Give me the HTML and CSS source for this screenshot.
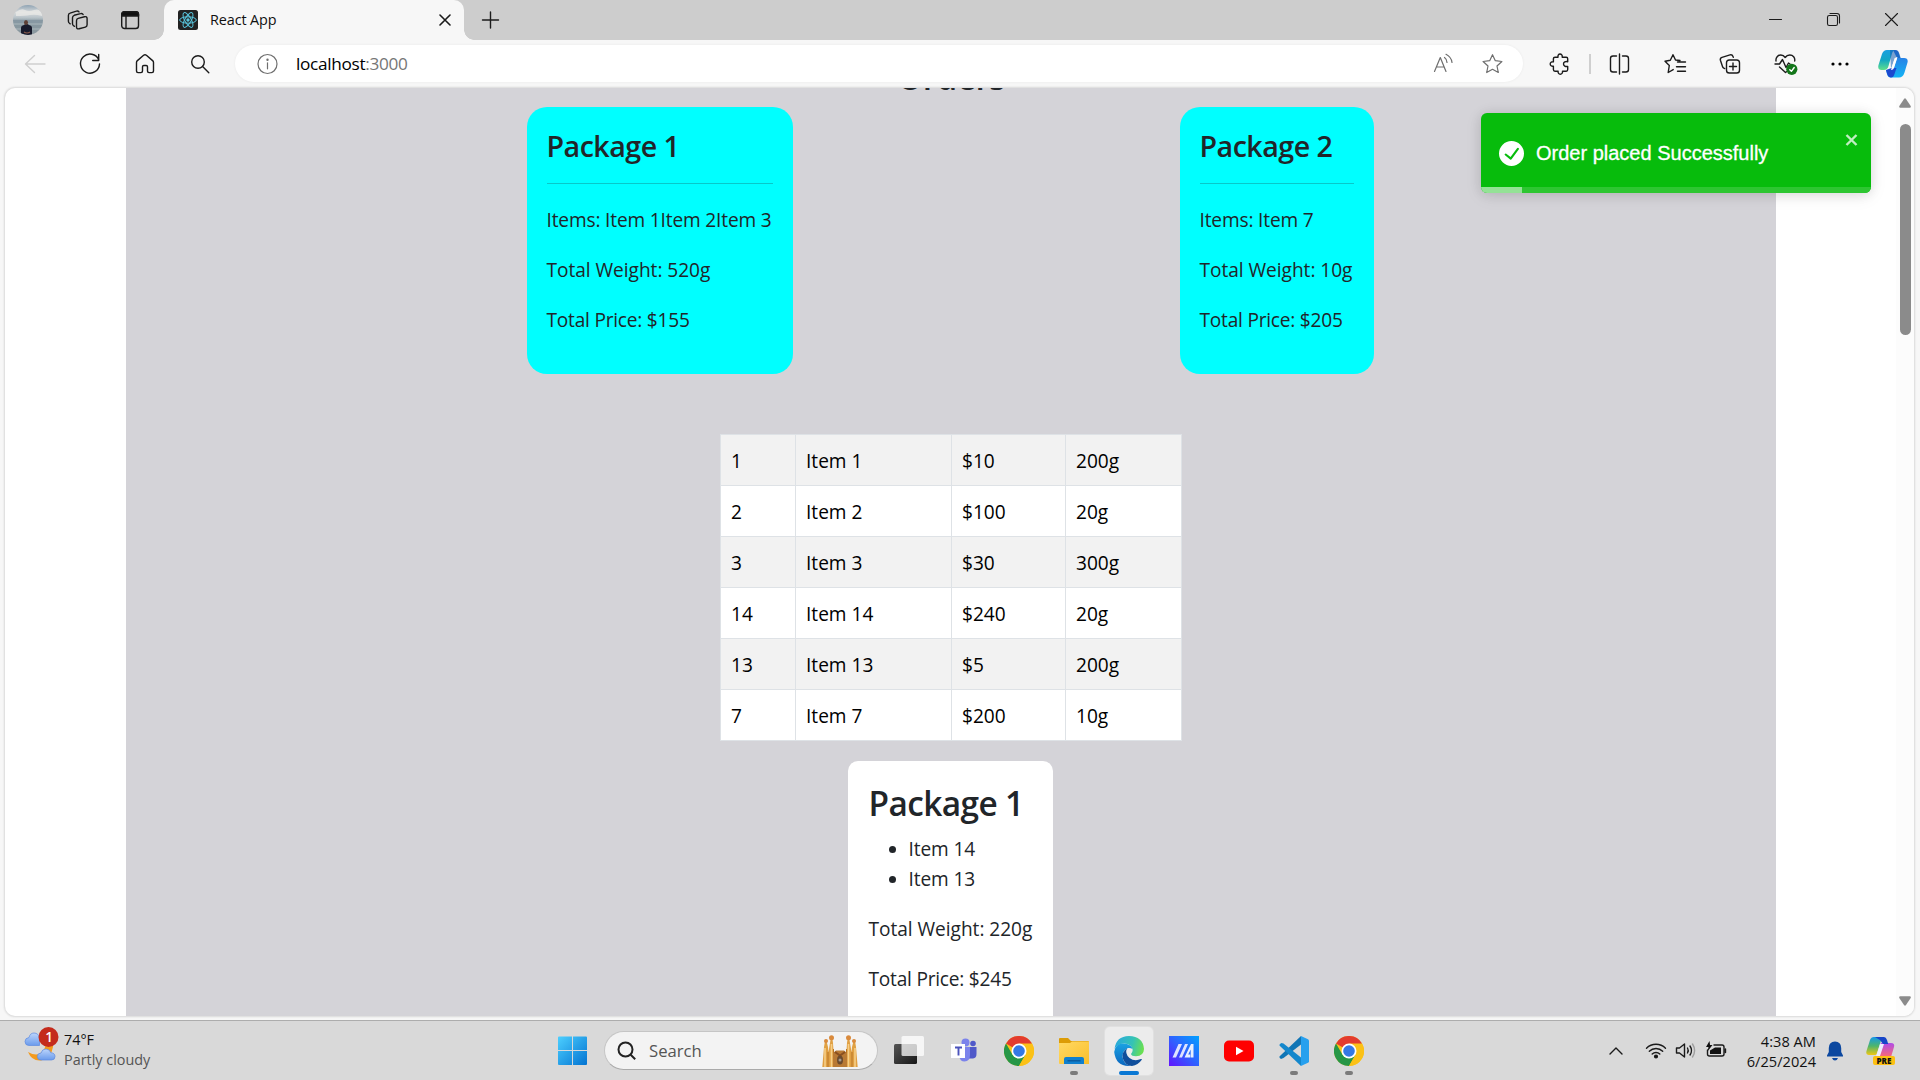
FILE: index.html
```html
<!DOCTYPE html>
<html lang="en">
<head>
<meta charset="utf-8">
<title>React App</title>
<link rel="stylesheet" href="styles.css">
</head>
<body>
<div class="screen">
  <header class="tabstrip">
    <svg class="avatar" width="30" height="30" viewBox="0 0 30 30">
      <defs>
        <clipPath id="av"><circle cx="15" cy="15" r="15"/></clipPath>
        <linearGradient id="sky" x1="0" y1="0" x2="0" y2="1"><stop offset="0" stop-color="#8fa3b3"/><stop offset=".25" stop-color="#d9dcdc"/><stop offset=".42" stop-color="#b9c3c9"/><stop offset=".5" stop-color="#8798a3"/><stop offset="1" stop-color="#8b989e"/></linearGradient>
      </defs>
      <g clip-path="url(#av)">
        <rect width="30" height="30" fill="url(#sky)"/>
        <path d="M3 7q5-4 9-2t9 0 8 3v3q-7-2-12-1T3 11z" fill="#e9e9e6" opacity=".8"/>
        <path d="M0 14h30M0 19h30M0 24h30" stroke="#c3cccf" opacity=".6"/>
        <path d="M8 30v-7q0-2.500 3-3l1.500-1h2l1.500 1q3 .5 3 3v7z" fill="#171a2b"/>
        <ellipse cx="13" cy="17.500" rx="2" ry="2.600" fill="#5d4036"/>
        <path d="M11 27q3 2 6 0" stroke="#8a5b4a" stroke-width="1.200" fill="none"/>
      </g>
    </svg>
    <svg class="ic workspaces" width="24" height="24" viewBox="0 0 24 24"><path d="M12.200 10.400l6.300-1.700c1.500-.4 2.600.4 2.600 1.900v6.200c0 1.200-.6 2-1.700 2.300l-6.300 1.700c-1.500.4-2.600-.4-2.600-1.900v-6.200c0-1.200.6-2 1.700-2.300z"/><path d="M8.500 18.300l-.6-.3c-.9-.5-1.400-1.200-1.400-2.200V9.700c0-1.200.6-2 1.700-2.400l6.300-1.700c1.200-.4 2.200 0 2.600 1"/><path d="M4.200 15.800l-.5-.3c-.8-.5-1.300-1.200-1.300-2.200V7.400c0-1.200.6-2 1.700-2.300l6.300-1.900c1-.4 2-.1 2.600.7"/></svg>
    <svg class="ic tabmenu" width="24" height="24" viewBox="0 0 24 24"><rect x="3.700" y="3.700" width="16.800" height="16.800" rx="2.800"/><path d="M3.700 8V6.200a2.500 2.500 0 0 1 2.500-2.500h11.800a2.500 2.500 0 0 1 2.500 2.500V8z" class="solid"/><path d="M8 8v12"/></svg>
    <div class="tab">
      <svg width="20" height="20" viewBox="0 0 20 20"><rect width="20" height="20" rx="2.500" fill="#222"/><g fill="none" stroke="#58c4dc" stroke-width="1"><ellipse cx="10" cy="10" rx="8.300" ry="3.200"/><ellipse cx="10" cy="10" rx="8.300" ry="3.200" transform="rotate(60 10 10)"/><ellipse cx="10" cy="10" rx="8.300" ry="3.200" transform="rotate(120 10 10)"/></g><circle cx="10" cy="10" r="1.700" fill="#58c4dc"/></svg>
      <span class="tab-title">React App</span>
      <svg class="ic thick" width="12" height="12" viewBox="0 0 12 12"><path d="M1 1l10 10M11 1L1 11"/></svg>
    </div>
    <svg class="ic newtab" width="20" height="20" viewBox="0 0 20 20"><path d="M10.500 2v16M2.500 10h16"/></svg>
    <div class="window-buttons">
      <svg class="ic thin" width="20" height="20" viewBox="0 0 20 20"><path d="M3.500 9.500h12" /></svg>
      <svg class="ic thin" width="20" height="20" viewBox="0 0 20 20"><rect x="3.500" y="5.500" width="10" height="10" rx="1.800"/><path d="M6 3.500h7a2.500 2.500 0 0 1 2.500 2.500v7"/></svg>
      <svg class="ic thin" width="20" height="20" viewBox="0 0 20 20"><path d="M3.500 3.500l12 12M15.500 3.500l-12 12"/></svg>
    </div>
  </header>

  <div class="toolbar">
    <nav class="nav-buttons">
      <svg class="ic disabled" width="24" height="24" viewBox="0 0 24 24"><path d="M22 12H2.500M11.500 3.500L2.500 12l9 8.500"/></svg>
      <svg class="ic" width="24" height="24" viewBox="0 0 24 24"><path d="M20.800 8A9.500 9.500 0 1 0 21.500 12M20.700 2.500v6h-6"/></svg>
      <svg class="ic" width="24" height="24" viewBox="0 0 24 24"><path d="M3.500 10.500c0-.8.300-1.400.9-1.900L10.600 3.200c.9-.7 1.900-.7 2.800 0l6.200 5.400c.6.500.9 1.100.9 1.900v8.600c0 .9-.6 1.500-1.500 1.500h-3c-.9 0-1.500-.6-1.500-1.500v-4.300c0-.8-.5-1.300-1.300-1.300h-2.400c-.8 0-1.300.5-1.300 1.300v4.300c0 .9-.6 1.500-1.500 1.500H5c-.9 0-1.500-.6-1.500-1.500z"/></svg>
      <svg class="ic" width="24" height="24" viewBox="0 0 24 24"><circle cx="10" cy="10" r="6.300"/><path d="M14.600 14.600l6.200 6.200"/></svg>
    </nav>
    <div class="address">
      <svg class="ic grey" width="22" height="22" viewBox="0 0 22 22"><circle cx="10.500" cy="11" r="9.500"/><path d="M10.500 9.800v6"/><circle cx="10.500" cy="6.700" r=".6"/></svg>
      <span class="url">localhost<span class="port">:3000</span></span>
      <div class="address-actions">
        <svg class="ic grey" width="24" height="24" viewBox="0 0 24 24"><path d="M3.500 19.500L9.300 5.500l5.700 14M5.500 15h7.500M13.500 5.500q2.300 1.600 2.500 5M15 2.300q5.500 3 6 8.200"/></svg>
        <svg class="ic grey" width="24" height="24" viewBox="0 0 24 24"><path d="M11.500 2.700l2.800 6 6.600.8-4.900 4.500 1.300 6.500-5.800-3.200-5.800 3.200 1.300-6.500-4.900-4.500 6.600-.8z"/></svg>
      </div>
    </div>
    <div class="tools">
      <svg class="ic t-puzzle" width="24" height="24" viewBox="0 0 24 24"><path d="M10 5.200C9.700 3.300 10.600 2 12 2s2.600 1.300 2.200 3.200h4c1 0 1.500.6 1.500 1.500v3c-2.200-.6-4.200.5-4.200 2.300s2 3 4.200 2.400v3.200c0 1-.5 1.600-1.500 1.600h-3.700c.3 1.800-.8 3-2.200 3s-2.500-1.200-2.200-3H7c-1 0-1.600-.6-1.600-1.600v-3.400C3.500 14.500 2.200 13.400 2.200 12s1.300-2.500 3.200-2.200V6.700c0-.9.600-1.500 1.600-1.500z"/></svg>
      <i class="divider"></i>
      <svg class="ic t-split" width="24" height="24" viewBox="0 0 24 24"><path d="M8.500 4H5A2.500 2.500 0 0 0 2.500 6.500v11A2.500 2.500 0 0 0 5 20H8.500M14.500 4H18a2.500 2.500 0 0 1 2.500 2.500v11A2.500 2.500 0 0 1 18 20h-3.500M11.500 2v20"/></svg>
      <svg class="ic" width="24" height="24" viewBox="0 0 24 24"><path d="M17 8.500l-4.500-.5L10 2.700 7.300 8.300 2 9.200l4.300 4.300L5.200 20.500l5-2.900M14.500 10h8M13.500 14.700h9M14.500 19.300h8"/></svg>
      <svg class="ic" width="24" height="24" viewBox="0 0 24 24"><rect x="8.500" y="8" width="13" height="13" rx="2.800"/><path d="M15 11v7M11.500 14.500h7M6.700 16.500l-.9-.3c-.8-.4-1.100-1-1.300-1.700L2.400 8.200c-.4-1.400.2-2.400 1.600-2.900L12 2.900c1.400-.4 2.500.2 3 1.600l.3.900"/></svg>
      <svg class="ic t-heart" width="26" height="24" viewBox="0 0 26 24"><path d="M2 9C1.500 5.500 4 3 6.800 3c2 0 3.400 1 4.400 2.500C12.200 4 13.800 3 15.800 3c3.200 0 5.500 2.500 4.900 6M1 12h4.500l3-4.500 3.500 8 2.500-4.500 1.500 1M5.500 15l6 5.500 1-.8"/><circle cx="17.800" cy="17.300" r="5.600" fill="#13761a" stroke="none"/><path d="M15.800 17.800l1.600 1.500 2.800-3.800" stroke="#fff"/></svg>
      <svg class="t-dots" width="24" height="24" viewBox="0 0 24 24"><circle cx="5" cy="12" r="1.600"/><circle cx="12" cy="12" r="1.600"/><circle cx="19" cy="12" r="1.600"/></svg>
      <svg class="t-copilot" width="30" height="28" viewBox="0 0 30 28">
        <defs><linearGradient id="c1" x1="0" y1="0" x2="0" y2="1"><stop offset="0" stop-color="#1a9fe0"/><stop offset=".5" stop-color="#12a7c4"/><stop offset="1" stop-color="#5fe08b"/></linearGradient><linearGradient id="c2" x1="0" y1="0" x2="0" y2="1"><stop offset="0" stop-color="#2f6ee0"/><stop offset="1" stop-color="#14b4f5"/></linearGradient></defs>
        <path d="M15 0h2q3 0 3.800 3l1.600 5H26q4.500 0 3.500 4.500l-3 10Q25 27.500 21 27.500h-8q-3 0-4-3.500l-1-4h5q2 0 3-3l3-9z" fill="url(#c2)"/>
        <path d="M8 20l1 3.500q1 4 4 4 2.500 0 3.500-3.500l2-6-5 0z" fill="#1c49cf"/>
        <path d="M9 0h8.500q-2.500 0-3.500 3.500L10.500 16Q9.500 20 6 20H3.500Q-.7 20 .5 15L4 4Q5.500 0 9 0z" fill="url(#c1)"/>
        <path d="M12 0h5.500q3 0 4 4l1.200 4H19q-2 0-3 2.500L13 19z" fill="#125bb0" opacity=".55"/>
        <path d="M16.500 8.500q1-1.500 3-1.500L16 18q-.8 2-3 2z" fill="#fff"/>
      </svg>
    </div>
  </div>

  <div class="page-frame">
    <main class="content">
      <h3 class="orders">Orders</h3>
      <section class="packages">
        <article class="package package-wide">
          <h4>Package 1</h4><hr>
          <p class="items">Items: Item 1Item 2Item 3</p><p class="weight">Total Weight: 520g</p><p class="price">Total Price: $155</p>
        </article>
        <article class="package package-narrow">
          <h4>Package 2</h4><hr>
          <p class="items">Items: Item 7</p><p class="weight">Total Weight: 10g</p><p class="price">Total Price: $205</p>
        </article>
      </section>
      <table class="items-table">
        <colgroup><col class="c-id"><col class="c-name"><col class="c-price"><col class="c-weight"></colgroup>
        <tbody>
          <tr><td>1</td><td>Item 1</td><td>$10</td><td>200g</td></tr>
          <tr><td>2</td><td>Item 2</td><td>$100</td><td>20g</td></tr>
          <tr><td>3</td><td>Item 3</td><td>$30</td><td>300g</td></tr>
          <tr><td>14</td><td>Item 14</td><td>$240</td><td>20g</td></tr>
          <tr><td>13</td><td>Item 13</td><td>$5</td><td>200g</td></tr>
          <tr><td>7</td><td>Item 7</td><td>$200</td><td>10g</td></tr>
        </tbody>
      </table>
      <article class="summary">
        <h3>Package 1</h3>
        <ul><li>Item 14</li><li>Item 13</li></ul>
        <p class="weight">Total Weight: 220g</p><p class="price">Total Price: $245</p>
      </article>
    </main>
    <div class="scrollbar">
      <svg width="12" height="10" viewBox="0 0 12 10"><path d="M5 .9q1-1.300 2 0L11.700 8q.6 1.700-1 1.700H1.300q-1.600 0-1-1.700z"/></svg>
      <i class="thumb"></i>
      <svg class="down" width="12" height="10" viewBox="0 0 12 10"><path d="M5 9.100q1 1.300 2 0L11.700 2q.6-1.700-1-1.700H1.300q-1.600 0-1 1.700z"/></svg>
    </div>
    <div class="toast">
      <svg width="25" height="25" viewBox="0 0 24 24" fill="#fff"><path d="M12 0a12 12 0 1 0 12 12A12.014 12.014 0 0 0 12 0zm6.927 8.200l-6.845 9.289a1.011 1.011 0 0 1-1.430.188l-4.888-3.908a1 1 0 1 1 1.250-1.562l4.076 3.261 6.227-8.451a1 1 0 1 1 1.610 1.183z"/></svg>
      <span>Order placed Successfully</span>
      <svg class="toast-close" width="13" height="14" viewBox="0 0 13 14"><path d="M1.500 2l10 10M11.500 2l-10 10"/></svg>
      <i class="toast-progress"></i>
    </div>
  </div>

  <footer class="taskbar">
    <div class="weather">
      <svg width="36" height="36" viewBox="0 0 36 36">
        <defs><linearGradient id="cl" x1="0" y1="0" x2="0" y2="1"><stop offset="0" stop-color="#bcd5fb"/><stop offset="1" stop-color="#6b9bec"/></linearGradient></defs>
        <path d="M29 17v3q-2 12-12 13.500Q8 34.500 4 25q9 5 14 0 3.500-4 4-8z" fill="#f49a1c"/>
        <path d="M5 18.500q-4 0-4-4 0-3.500 4-4Q6 6 10 6q4.500 0 5.500 5v7.500z" fill="url(#cl)" stroke="#5e8be0" stroke-width=".7"/>
        <path d="M17 33q-3.500 0-3.700-3.500Q13.500 26 17 26q1-4 5-4 3.600 0 4.800 3.700Q31 26 31 29.500q0 3.500-3.500 3.500z" fill="url(#cl)" stroke="#5e8be0" stroke-width=".7"/>
        <circle cx="24.500" cy="10" r="10" fill="#c42b1c"/>
        <text x="25" y="15" class="badge-text">1</text>
      </svg>
      <div class="weather-text"><div>74°F</div><div class="muted">Partly cloudy</div></div>
    </div>
    <div class="apps">
      <svg class="start" width="30" height="30" viewBox="0 0 30 30"><defs><linearGradient id="win" gradientUnits="userSpaceOnUse" x1="0" y1="0" x2="30" y2="30"><stop offset="0" stop-color="#4dd0ff"/><stop offset="1" stop-color="#0070d0"/></linearGradient></defs><path d="M0 1.500Q0 .5 1 .5h13V14H0zM15 .5h13q1 0 1 1V14H15zM0 15h14v14H1q-1 0-1-1zM15 15h14v13q0 1-1 1H15z" fill="url(#win)"/></svg>
      <div class="search">
        <svg width="20" height="20" viewBox="0 0 20 20"><circle cx="8.500" cy="8.500" r="7"/><path d="M13.700 13.700l4.500 4.500"/></svg>
        <span>Search</span>
        <svg class="castle" width="36" height="32" viewBox="0 0 36 32">
          <path d="M.3 32L2 12l1-6h1.500L6 12l.5 5L8 8l.8-5h1.500L11 8l1.500 24z" fill="#e0a043"/>
          <path d="M35.700 32L34 12l-1-6h-1.500L30 12l-.5 5L28 8l-.8-5h-1.500L25 8l-1.500 24z" fill="#e0a043"/>
          <path d="M3 32V13M9.500 32V9M33 32V13M26.500 32V9" stroke="#f7cf87" stroke-width="1.600"/>
          <path d="M6 32V17M30 32V17M11.500 32V14M24.500 32V14" stroke="#b87426"/>
          <path d="M11 32V18l3-2.500h8l3 2.500v14z" fill="#b97a35"/><path d="M13 17l5 3.500 5-3.500" fill="none" stroke="#8a4f20" stroke-width="2"/>
          <ellipse cx="18" cy="25" rx="3" ry="4.500" fill="#6b4b2f"/><circle cx="18" cy="25" r="1.500" fill="#a39a90"/>
          <g fill="#d98a3c"><circle cx="4" cy="6" r="2"/><circle cx="9.500" cy="2.800" r="2.500"/><circle cx="26.500" cy="2.800" r="2.500"/><circle cx="32" cy="6" r="2"/></g>
        </svg>
      </div>
      <svg class="taskview" width="30" height="29" viewBox="0 0 30 29"><defs><linearGradient id="tv" x1="0" y1="0" x2="1" y2="1"><stop offset="0" stop-color="#555"/><stop offset="1" stop-color="#171717"/></linearGradient></defs><rect x="0" y="8" width="23" height="20" rx="1.500" fill="url(#tv)"/><rect x="7.500" width="22.500" height="20" rx="1.500" fill="#fff" opacity=".75"/></svg>
      <svg class="teams" width="28" height="26" viewBox="0 0 28 26"><circle cx="15.500" cy="4.500" r="4" fill="#7b83eb"/><circle cx="23" cy="5.500" r="2.800" fill="#5059c9"/><path d="M19 9h7.500v7q0 4-3.500 4.500h-4z" fill="#5059c9"/><path d="M9 9h11v8q0 6-5.500 6.500Q10 23.500 9 18z" fill="#7b83eb"/><rect x="1" y="6" width="14" height="14" fill="#fff"/><path d="M5 9.500h7M8.500 9.500v8" stroke="#4b53bc" stroke-width="1.900"/></svg>
      <div class="app"><svg width="30" height="30" viewBox="0 0 30 30"><g id="chrome-logo"><circle cx="15" cy="15" r="15" fill="#fbc116"/><path d="M15 15L2 7.500A15 15 0 0 1 28 7.500z" fill="#e33b2e"/><path d="M2 7.500A15 15 0 0 0 15 30L21.500 18.700 15 21.500 8.500 18.700z" fill="#269646"/><path d="M15 7.500h13A15 15 0 0 1 15 30l6.500-11.200z" fill="#fbc116"/><circle cx="15" cy="15" r="7.500" fill="#fff"/><circle cx="15" cy="15" r="5.800" fill="#3578e5"/></g></svg></div>
      <div class="app running"><svg width="30" height="30" viewBox="0 0 30 30"><defs><linearGradient id="fo" x1="0" y1="0" x2="1" y2="1"><stop offset="0" stop-color="#ffd964"/><stop offset="1" stop-color="#fbbf2a"/></linearGradient></defs><path d="M0 3q0-1 1-1h8l3 3h17q1 0 1 1v4H0z" fill="#dc9c06"/><path d="M0 7h11l2-1.500h17V28H1q-1 0-1-1z" fill="url(#fo)"/><path d="M5 28v-5q0-2 2-2h16q2 0 2 2v5z" fill="#1080cf"/><path d="M8.500 24.800h13" stroke="#0b5495" stroke-width="1.200"/></svg></div>
      <div class="app active"><svg width="30" height="30" viewBox="0 0 30 30"><defs><linearGradient id="e1" x1="0" y1=".3" x2="1" y2=".5"><stop offset="0" stop-color="#2aa9dd"/><stop offset=".6" stop-color="#35c3b5"/><stop offset="1" stop-color="#6be04f"/></linearGradient><linearGradient id="e2" x1="0" y1="0" x2="0" y2="1"><stop offset="0" stop-color="#1ba2e2"/><stop offset="1" stop-color="#0b66bf"/></linearGradient></defs><path d="M.5 13Q2 .2 15 0q14 .5 15 13-.2 7-8 7.200-4.500 0-5-2.200 1.700-2 1.700-4Q18 8 10 7.500 3 8 .5 13z" fill="url(#e1)"/><path d="M.2 16Q1 7.500 9.500 7.500 17.500 8 18.500 13q-2-1.500-4.500-1-5.500 2.500-5.500 9 1 7 8 8.900Q2 31 .2 16z" fill="url(#e2)"/><path d="M13 12.200q-5.500 4-4.300 10Q11 29.500 18 30q6-.8 9.800-6.200.3-1-.8-.7-6.500 2.700-11.500-1.100-5-4.500-2.500-9.800z" fill="#104f9c"/></svg></div>
      <div class="app"><svg width="30" height="30" viewBox="0 0 30 30"><defs><linearGradient id="as" x1="0" y1="1" x2="1" y2="0"><stop offset="0" stop-color="#6213ff"/><stop offset=".5" stop-color="#2f62ff"/><stop offset="1" stop-color="#00a2ff"/></linearGradient></defs><rect width="30" height="30" fill="url(#as)"/><path d="M3.500 21.500L9.500 8h3.500L7 21.500zM10 21.500L16 8h3l-6 13.500z" fill="#dfe4ff"/><path d="M15.500 21.500L22 8h2.500v13.500h-2.800v-8l-2.500 5h2v3z" fill="#e8f0ff"/></svg></div>
      <div class="app"><svg width="30" height="30" viewBox="0 0 30 30"><rect y="4.500" width="30" height="21" rx="5" fill="#f00"/><path d="M12 10.700v8.600l7.500-4.300z" fill="#fff"/></svg></div>
      <div class="app running"><svg width="30" height="30" viewBox="0 0 30 30"><path d="M22 0v8.500L4.500 22 2 23Q-.3 21.500.7 20.200z" fill="#1075b5"/><path d="M22 30v-8.500L4.500 7.500 2.500 7Q-.3 8.500.7 9.800z" fill="#1487cc"/><path d="M22 0l7 3.200q1 .5 1 1.600v20.400q0 1.100-1 1.600L22 30z" fill="#27a0ee"/></svg></div>
      <div class="app running"><svg width="30" height="30" viewBox="0 0 30 30"><use href="#chrome-logo"/></svg></div>
    </div>
    <div class="tray">
      <svg class="ic" width="16" height="16" viewBox="0 0 16 16"><path d="M2 11l6-6 6 6"/></svg>
      <svg class="ic t-wifi" width="22" height="22" viewBox="0 0 22 22"><path d="M1.500 8.200a13.500 13.500 0 0 1 19 0M4.300 11.200a9.500 9.500 0 0 1 13.400 0M7.200 14a5.400 5.400 0 0 1 7.600 0"/><circle cx="11" cy="16.500" r="1.400" class="solid"/></svg>
      <svg class="ic t-sound" width="22" height="22" viewBox="0 0 22 22"><path d="M1.500 8h3L9.500 4v13l-5-4h-3zM12.500 8q1.500 2.500 0 5M15 6q3 4.500 0 9"/><path d="M17.500 4q4.200 6.500 0 13" opacity=".3"/></svg>
      <svg class="ic t-battery" width="22" height="22" viewBox="0 0 22 22"><path d="M9 5h8a2 2 0 0 1 2 2v7a2 2 0 0 1-2 2H4.500a2 2 0 0 1-2-2v-4M20.500 9v3.500"/><path d="M5 14v-3.500l5-3h6V14zM4.500 1L1 7h2.500l-1 4.500L7.500 5H5z" class="solid" stroke="none"/></svg>
      <div class="clock"><div>4:38 AM</div><div>6/25/2024</div></div>
      <svg class="t-bell" width="18" height="20" viewBox="0 0 18 20"><path d="M9 .5q6 0 6.200 6.500V11l1.800 3.500v1H1v-1L2.800 11V7Q3 .5 9 .5zM6 17h6q-1 2.500-3 2.500T6 17z" fill="#0c48a0"/></svg>
      <svg class="t-pre" width="30" height="30" viewBox="0 0 30 30">
        <defs><linearGradient id="p1" x1="0" y1="0" x2="0" y2="1"><stop offset="0" stop-color="#159ae8"/><stop offset=".5" stop-color="#4eb56c"/><stop offset="1" stop-color="#f0c813"/></linearGradient><linearGradient id="p2" x1="0" y1="0" x2="0" y2="1"><stop offset="0" stop-color="#b04ce8"/><stop offset="1" stop-color="#fb6a72"/></linearGradient></defs>
        <path d="M15 7h10q4 0 3 4l-3 10H10z" fill="url(#p2)"/><path d="M8 1h8l-5 17q-.5 1-2 1H3q-3.500 0-2.500-4L4 4q1-3 4-3z" fill="url(#p1)"/><path d="M9 1h9q2 0 3 3l1.200 4H17l-3-4z" fill="#1746c8"/><path d="M14 8h4l-4 12h-4z" fill="#eef"/>
        <rect x="7" y="20" width="22" height="9" rx="2" fill="#fcc012"/><text x="18" y="27.500" class="pre-text">PRE</text>
      </svg>
    </div>
  </footer>
</div>
</body>
</html>
```
FILE: styles.css
```css
* { box-sizing: border-box; }
body { margin: 0; font-family: "Open Sans", "Noto Sans", sans-serif; color: #212529; }
.screen { width: 1920px; height: 1080px; display: flex; flex-direction: column; overflow: hidden; background: #f7f7f7; }
svg { display: block; flex: none; }

.ic { fill: none; stroke: #1b1b1b; stroke-width: 1.4; stroke-linecap: round; stroke-linejoin: round; }
.ic .solid { fill: #111; }
.ic.thin { stroke-width: 1.1; }
.ic.thick { stroke-width: 1.6; }
.ic.grey { stroke: #6e6e6e; stroke-width: 1.2; }
.ic.disabled { stroke: #cfcfcf; }

/* Browser tab strip */
.tabstrip { height: 40px; flex: none; background: #cdcdcd; display: flex; align-items: center; padding: 0 18px 0 13px; }
.workspaces { margin-left: 23px; }
.tabmenu { margin-left: 28px; }
.tab { position: relative; width: 300px; height: 40px; margin-left: 22px; padding: 0 13px 0 14px; display: flex; align-items: center; background: #f7f7f7; border-radius: 10px 10px 0 0; color: #111; font-size: 14.4px; }
.tab::before, .tab::after { content: ""; position: absolute; bottom: 0; width: 10px; height: 10px; }
.tab::before { left: -10px; background: radial-gradient(circle at 0 0, transparent 9.5px, #f7f7f7 10px); }
.tab::after { right: -10px; background: radial-gradient(circle at 100% 0, transparent 9.5px, #f7f7f7 10px); }
.tab-title { margin: 0 0 2px 12px; flex: 1; letter-spacing: -.1px; }
.newtab { margin-left: 16px; }
.window-buttons { margin-left: auto; display: flex; gap: 38px; }

/* Browser toolbar */
.toolbar { height: 48px; flex: none; display: flex; align-items: center; padding: 0 12px 1px 23px; }
.nav-buttons { display: flex; gap: 31px; }
.address { margin-left: 23px; width: 1288px; height: 37px; padding: 0 18px 0 22px; display: flex; align-items: center; background: #fff; border-radius: 19px; box-shadow: 0 0 3px rgba(0,0,0,.06); }
.url { margin-left: 17px; font-size: 17.2px; color: #000; letter-spacing: -.3px; }
.port { color: #767676; }
.address-actions { margin-left: auto; display: flex; gap: 26px; }
.tools { display: flex; align-items: center; flex: 1; gap: 31px; margin-left: 25px; }
.divider { width: 2px; height: 20px; background: #cfcfcf; margin: 0 -14px; }
.t-heart { margin-left: 1px; margin-right: -3px; }
.t-copilot { margin-left: -5px; }

/* Web page */
.page-frame { position: relative; width: 1909px; height: 928px; margin-left: 5px; flex: none; display: flex; overflow: hidden; background: #fff; border-radius: 10px; box-shadow: 0 0 2px 1px rgba(0,0,0,.12); }
.content { flex: none; width: 1650px; margin-left: 121px; background: #d4d3d8; display: flex; flex-direction: column; align-items: center; }
h3, h4, p, ul { margin: 0; }
h3, h4 { font-weight: 600; }
h3 { font-size: 33.4px; line-height: 44px; letter-spacing: -.6px; }
.orders { margin: -33px 0 8px; }
.packages { display: flex; gap: 387px; flex: none; margin-right: 2px; }
.package { height: 267px; padding: 20px; background: #0ff; border-radius: 20px; flex: none; }
.package-wide { width: 266px; }
.package-narrow { width: 194px; }
.package h4 { font-size: 28.6px; line-height: 38px; letter-spacing: -.5px; }
.package hr { margin: 18px 0 21px; border: 0; border-top: 1px solid rgba(33,37,41,.25); }
p, li, td { font-size: 19.1px; line-height: 30px; white-space: nowrap; }
p { margin-bottom: 20px; }
.items { letter-spacing: -.15px; }
.weight { letter-spacing: -.03px; }
.price { letter-spacing: -.22px; }
.items-table { margin-top: 60px; width: 462px; table-layout: fixed; border-collapse: collapse; flex: none; color: #000; }
.items-table td { height: 51px; padding: 11px 10px 9px; border: 1px solid #dee2e6; background: #fff; }
.items-table tr:nth-child(odd) td { background: #f2f2f2; }
.c-id { width: 75px; }
.c-name { width: 156px; }
.c-price { width: 114px; }
.summary { flex: none; margin: 20px 2px 0 0; width: 205px; height: 290px; padding: 20px 21px; background: #fff; border-radius: 10px; }
.summary ul { margin: 9px 0 20px; padding-left: 40px; }
.summary li { letter-spacing: -.12px; }

.scrollbar { width: 18px; margin-left: auto; padding: 10px 0; background: #fcfcfc; display: flex; flex-direction: column; align-items: center; fill: #8b8b8b; }
.thumb { width: 11px; height: 211px; margin-top: 16px; border-radius: 6px; background: #8b8b8b; }
.down { margin-top: auto; }

.toast { position: absolute; left: 1476px; top: 25px; width: 390px; height: 80px; padding-left: 18px; display: flex; align-items: center; background: #07bc0c; color: #fff; border-radius: 6px; box-shadow: 0 1px 12px rgba(0,0,0,.1), 0 3px 18px rgba(0,0,0,.08); font: 20px "Liberation Sans", Arial, sans-serif; }
.toast span { margin-left: 12px; -webkit-text-stroke: .3px #fff; }
.toast-close { position: absolute; right: 13px; top: 20px; fill: none; stroke: rgba(255,255,255,.75); stroke-width: 2.4; }
.toast-progress { position: absolute; left: 0; right: 0; bottom: 0; height: 6px; border-radius: 0 0 6px 6px; background: linear-gradient(90deg, #94e296 41px, #2dc631 41px); }

/* Desktop taskbar */
.taskbar { height: 60px; margin-top: 4px; flex: none; background: #d9d9d9; border-top: 1px solid #adadad; display: flex; align-items: center; }
.weather { width: 534px; padding-left: 24px; display: flex; align-items: center; font-size: 14.4px; line-height: 20px; color: #111; }
.weather svg { margin-top: -12px; }
.weather-text { margin: -2px 0 0 4px; }
.muted { color: #555; }
.badge-text { font-size: 13.5px; font-weight: 600; fill: #fff; text-anchor: middle; }
.apps { display: flex; align-items: center; height: 59px; }
.start { margin-left: 24px; }
.search { width: 274px; height: 39px; margin-left: 16px; padding: 0 19px 0 12px; display: flex; align-items: center; background: #f3f3f3; border: 1px solid #c5c5c5; border-bottom-color: #aaa; border-radius: 20px; font-size: 16.7px; color: #555; }
.search > svg:first-child { fill: none; stroke: #222; stroke-width: 2; }
.search span { margin-left: 12px; flex: 1; }
.search .castle { stroke-width: 1; }
.taskview { margin-left: 16px; }
.teams { margin: 0 17px 0 26px; }
.app { position: relative; width: 48px; height: 48px; margin-right: 7px; padding: 9px; border-radius: 5px; }
.app.active { background: #ececec; box-shadow: 0 0 0 1px #e0e0e0; }
.app.running::after, .app.active::after { content: ""; position: absolute; left: 20px; bottom: 0; width: 8px; height: 4px; border-radius: 2px; background: #7b7b7b; }
.app.active::after { left: 14px; width: 20px; background: #0a78d4; }
.tray { margin-left: auto; padding-right: 24px; display: flex; align-items: center; }
.t-wifi { margin-left: 21px; }
.t-sound { margin-left: 8px; }
.t-battery { margin-left: 8px; }
.clock { margin-left: 11px; width: 78px; font-size: 14.6px; line-height: 20px; color: #111; white-space: nowrap; display: flex; flex-direction: column; align-items: flex-end; letter-spacing: .02px; }
.t-bell { margin-left: 10px; }
.t-pre { margin-left: 22px; }
.pre-text { font: 800 8px "Open Sans", sans-serif; text-anchor: middle; fill: #111; }
```
